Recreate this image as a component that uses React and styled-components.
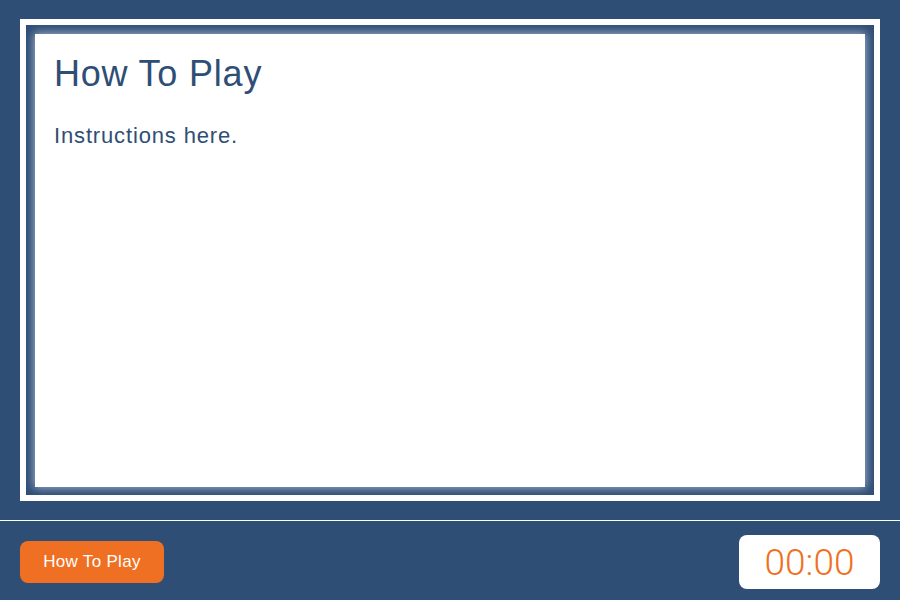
import React from 'react';
import styled, { createGlobalStyle } from 'styled-components';

const navy = '#2f4e76';
const orange = '#ef7022';

const GlobalStyle = createGlobalStyle`
  html, body {
    margin: 0;
    padding: 0;
    background: ${navy};
  }
  #root {
    height: 600px;
  }
`;

const Page = styled.div`
  display: flex;
  flex-direction: column;
  width: 900px;
  height: 600px;
  background: ${navy};
  font-family: 'Liberation Sans', Arial, sans-serif;
`;

const Stage = styled.div`
  height: 521px;
  box-sizing: border-box;
  padding: 19px 20px 19px 20px;
  border-bottom: 1px solid #ffffff;
`;

const Frame = styled.div`
  height: 100%;
  box-sizing: border-box;
  border: 6px solid #ffffff;
  padding: 9px 9px 8px 9px;
  background: ${navy};
`;

const Card = styled.div`
  height: 100%;
  box-sizing: border-box;
  padding: 20px 19px;
  background: #ffffff;
  box-shadow: 0 0 9px 1px rgba(200, 212, 232, 0.75);
  color: ${navy};
`;

const Title = styled.h1`
  margin: 0;
  font-size: 36px;
  line-height: 40px;
  font-weight: 400;
  letter-spacing: 0.8px;
`;

const Body = styled.p`
  margin: 29px 0 0;
  font-size: 22px;
  line-height: 26px;
  letter-spacing: 0.85px;
`;

const Footer = styled.div`
  flex: 1;
  display: flex;
  align-items: center;
  justify-content: space-between;
  padding: 3px 20px 0;
`;

const Button = styled.button`
  width: 144px;
  height: 42px;
  border: none;
  border-radius: 8px;
  background: ${orange};
  color: #ffffff;
  font-family: 'Liberation Sans', Arial, sans-serif;
  font-size: 17px;
  letter-spacing: 0.3px;
  padding: 0;
  cursor: pointer;
`;

const Timer = styled.div`
  width: 141px;
  height: 54px;
  border-radius: 8px;
  background: #ffffff;
  color: ${orange};
  display: flex;
  align-items: center;
  justify-content: center;
  font-family: Roboto, 'Liberation Sans', sans-serif;
  font-weight: 300;
  font-size: 37px;
`;

export default function App() {
  return (
    <>
      <GlobalStyle />
      <Page>
        <Stage>
          <Frame>
            <Card>
              <Title>How To Play</Title>
              <Body>Instructions here.</Body>
            </Card>
          </Frame>
        </Stage>
        <Footer>
          <Button>How To Play</Button>
          <Timer>00:00</Timer>
        </Footer>
      </Page>
    </>
  );
}
